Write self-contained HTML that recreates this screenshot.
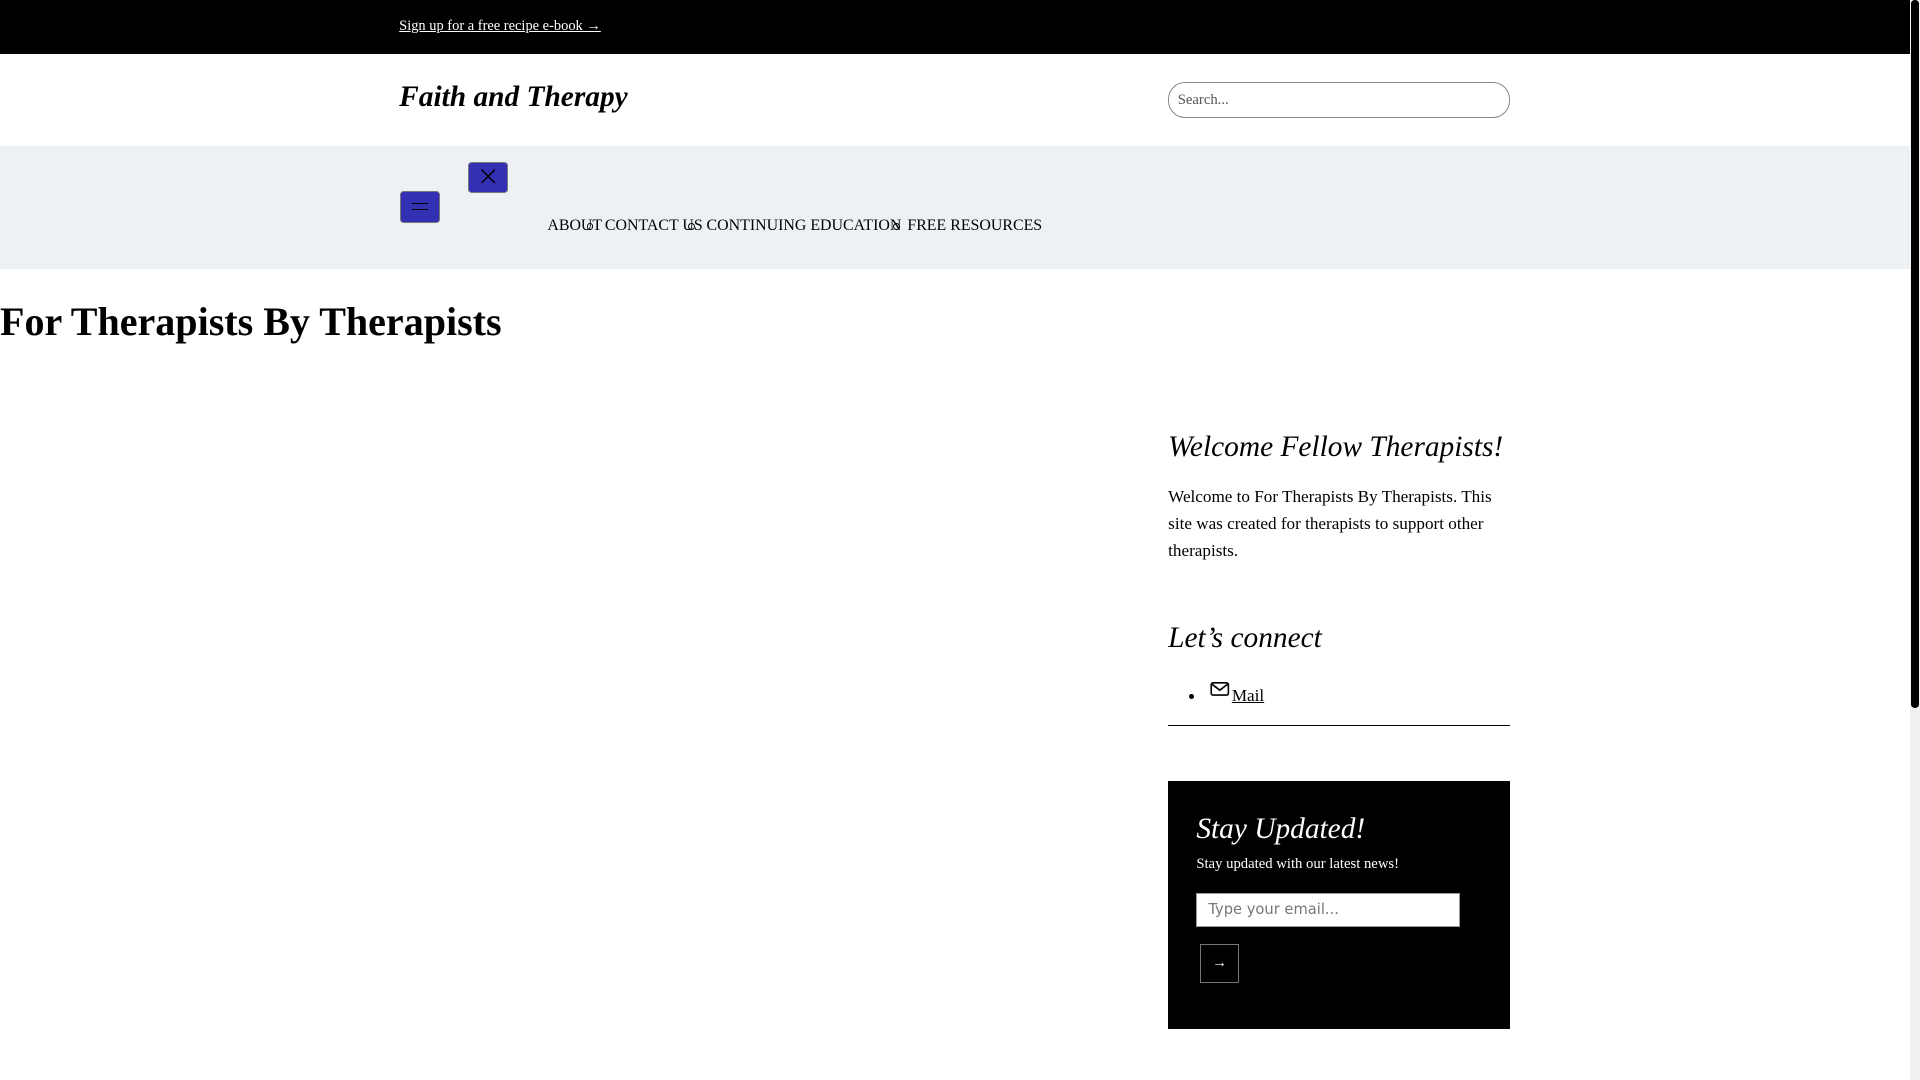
<!DOCTYPE html>
<html><head><meta charset="utf-8"><style>
html{zoom:1.22449}
body{margin:0;width:1568px;height:882px;overflow:hidden;font-family:"Liberation Serif",serif;background:#fff;position:relative;color:#000}
.a{position:absolute}
</style></head><body>
<div class="a" style="left:0;top:0;width:1560px;height:44px;background:#000"></div>
<div class="a" style="left:326px;top:15px;font-size:11.8px;color:#fff;text-decoration:underline">Sign up for a free recipe e-book →</div>
<div class="a" style="left:1560px;top:0;width:8px;height:882px;background:#f1f1f1"></div>
<div class="a" style="left:1561px;top:0;width:6px;height:578px;background:#000;border-radius:3px"></div>
<div class="a" style="left:326px;top:66px;font-size:24px;font-weight:bold;font-style:italic">Faith and Therapy</div>
<div class="a" style="left:954px;top:67px;width:279px;height:29px;border:1px solid #888;border-radius:14px;box-sizing:border-box;font-size:12px;color:#555;padding:7px 7px">Search...</div>
<div class="a" style="left:0;top:119px;width:1560px;height:101px;background:#eef1f4"></div>
<div class="a" style="left:327px;top:156px;width:32px;height:26px;background:#3430b4;border:1px solid #777;border-radius:3px;box-sizing:border-box"><div class="a" style="left:9px;top:9px;width:13px;height:1px;background:#000"></div><div class="a" style="left:9px;top:14px;width:13px;height:1px;background:#000"></div></div>
<div class="a" style="left:382px;top:132px;width:33px;height:26px;background:#3430b4;border:1px solid #777;border-radius:3px;box-sizing:border-box"><svg width="33" height="26" style="position:absolute;left:-1px;top:-1px"><path d="M11 7L22 18M22 7L11 18" stroke="#000" stroke-width="1.2"/></svg></div>
<div class="a" style="left:479px;top:182px;width:4px;height:4px;border:1px solid #000;border-radius:50%"></div>
<div class="a" style="left:562px;top:182px;width:4px;height:4px;border:1px solid #000;border-radius:50%"></div>
<div class="a" style="left:729px;top:182px;width:4px;height:4px;border:1px solid #000;border-radius:50%"></div>
<div class="a" style="left:447px;top:177px;font-size:13px;white-space:nowrap">ABOUT</div>
<div class="a" style="left:494px;top:177px;font-size:13px;white-space:nowrap">CONTACT US</div>
<div class="a" style="left:577px;top:177px;font-size:13px;white-space:nowrap">CONTINUING EDUCATION</div>
<div class="a" style="left:741px;top:177px;font-size:13px;white-space:nowrap">FREE RESOURCES</div>
<div class="a" style="left:0;top:243px;font-size:32.7px;font-weight:bold;white-space:nowrap">For Therapists By Therapists</div>
<div class="a" style="left:954px;top:352px;font-size:24px;font-style:italic;white-space:nowrap">Welcome Fellow Therapists!</div>
<div class="a" style="left:954px;top:395px;width:280px;font-size:14px;line-height:22px">Welcome to For Therapists By Therapists. This site was created for therapists to support other therapists.</div>
<div class="a" style="left:954px;top:508px;font-size:24px;font-style:italic">Let’s connect</div>
<div class="a" style="left:971px;top:567px;width:4px;height:4px;background:#000;border-radius:50%"></div>
<svg class="a" style="left:988px;top:556px" width="17" height="14"><rect x="1" y="1.5" width="14" height="10" rx="1.5" fill="none" stroke="#000" stroke-width="1.3"/><path d="M1.5 2.5L8 7.5L14.5 2.5" fill="none" stroke="#000" stroke-width="1.3"/></svg>
<div class="a" style="left:1006px;top:560px;font-size:14px;text-decoration:underline">Mail</div>
<div class="a" style="left:954px;top:592px;width:279px;height:1px;background:#000"></div>
<div class="a" style="left:954px;top:638px;width:279px;height:202px;background:#000"></div>
<div class="a" style="left:977px;top:664px;font-size:24px;font-style:italic;color:#fff">Stay Updated!</div>
<div class="a" style="left:977px;top:699px;font-size:12px;color:#fff">Stay updated with our latest news!</div>
<div class="a" style="left:977px;top:729px;width:215px;height:28px;background:#fff;border:1px solid #999;box-sizing:border-box;font-family:'DejaVu Sans',sans-serif;font-size:12px;color:#777;padding:6px 9px">Type your email...</div>
<div class="a" style="left:980px;top:771px;width:32px;height:32px;border:1px solid #777;box-sizing:border-box;color:#fff;font-size:12px;text-align:center;line-height:30px">→</div>
</body></html>
